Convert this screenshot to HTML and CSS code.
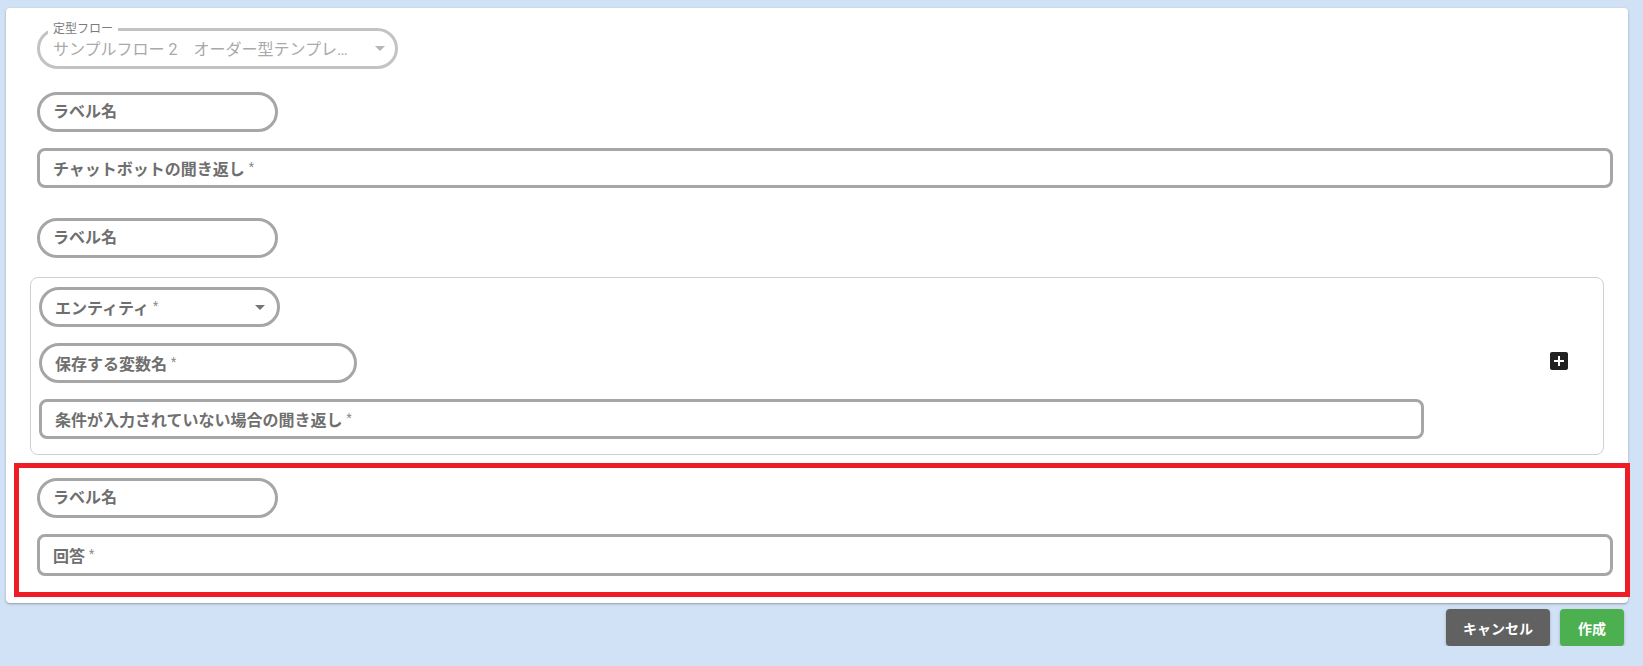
FILE: index.html
```html
<!DOCTYPE html>
<html lang="ja">
<head>
<meta charset="utf-8">
<title>Form</title>
<link rel="stylesheet" href="styles.css">
</head>
<body>
<div class="page">
  <div class="card">
    <div class="select is-disabled">
      <span class="float-label">定型フロー</span>
      <span class="select-value">サンプルフロー 2　オーダー型テンプレ…</span>
      <span class="caret caret-light"></span>
    </div>

    <div class="field pill w-short mt-23"><span class="ph">ラベル名</span></div>
    <div class="field box mt-16 mr-15"><span class="ph">チャットボットの聞き返し<span class="req">*</span></span></div>

    <div class="field pill w-short mt-30"><span class="ph">ラベル名</span></div>

    <div class="group">
      <div class="group-fields">
        <div class="field pill w-short select-like"><span class="ph">エンティティ<span class="req">*</span></span><span class="caret"></span></div>
        <div class="field pill w-var mt-16"><span class="ph">保存する変数名<span class="req">*</span></span></div>
        <div class="field box mt-16"><span class="ph">条件が入力されていない場合の聞き返し<span class="req">*</span></span></div>
      </div>
      <svg class="add-icon" viewBox="0 0 24 24" width="24" height="24" aria-hidden="true">
        <path fill="#212121" d="M19 3H5c-1.11 0-2 .9-2 2v14c0 1.1.89 2 2 2h14c1.1 0 2-.9 2-2V5c0-1.1-.9-2-2-2zm-2 10h-4v4h-2v-4H7v-2h4V7h2v4h4v2z"/>
      </svg>
    </div>

    <div class="highlight">
      <div class="field pill w-short"><span class="ph">ラベル名</span></div>
      <div class="field box tall mt-16"><span class="ph">回答<span class="req">*</span></span></div>
    </div>
  </div>

  <div class="actions">
    <button class="btn btn-cancel">キャンセル</button>
    <button class="btn btn-create">作成</button>
  </div>
</div>
</body>
</html>
```

FILE: styles.css
```css
* { box-sizing: border-box; }

html, body {
  margin: 0;
  padding: 0;
  background: #d1e1f6;
  font-family: "Roboto", "Noto Sans CJK JP", sans-serif;
}

.page {
  padding: 8px 15px 0 6px;
}

.card {
  background: #ffffff;
  border-radius: 4px;
  box-shadow: 0 1px 3px rgba(0, 0, 0, 0.22), 0 1px 1px rgba(0, 0, 0, 0.12);
  padding: 20px 0 6px 31px;
}

/* disabled select with notched label */
.select {
  position: relative;
  display: flex;
  align-items: center;
  width: 361px;
  height: 41px;
  border: 3px solid #c3c3c3;
  border-radius: 21px;
  padding: 3px 13px 0 13px;
}

.float-label {
  position: absolute;
  left: 8px;
  top: -9px;
  height: 14px;
  line-height: 14px;
  padding: 0 5px;
  background: #ffffff;
  font-size: 12px;
  color: #7a7a7a;
}

.select-value {
  flex: 1;
  white-space: nowrap;
  overflow: hidden;
  font-size: 16px;
  color: #a9a9a9;
  line-height: 20px;
}

.caret {
  width: 0;
  height: 0;
  border-left: 5px solid transparent;
  border-right: 5px solid transparent;
  border-top: 5px solid #757575;
  margin-left: auto;
}

.caret-light {
  border-top-color: #b6b6b6;
  margin-top: -3px;
  margin-right: -3px;
}

/* text fields */
.field {
  display: flex;
  align-items: center;
  height: 40px;
  border: 3px solid #a6a6a6;
  padding: 0 13px;
  background: #ffffff;
}

.tall { height: 42px; }

.pill { border-radius: 20px; }
.box { border-radius: 8px; }

.w-short { width: 241px; }
.w-var { width: 318px; }

.select-like { padding-right: 12px; }

.ph {
  font-size: 16px;
  font-weight: 700;
  color: #6f6f6f;
  line-height: 20px;
  white-space: nowrap;
}

.req {
  font-weight: 400;
  font-size: 12px;
  color: #8a8a8a;
  margin-left: 4px;
  vertical-align: 4px;
}

.mt-16 { margin-top: 16px; }
.mt-23 { margin-top: 23px; }
.mt-30 { margin-top: 30px; }
.mr-15 { margin-right: 15px; }

/* grouped block */
.group {
  display: grid;
  grid-template-columns: 1fr 24px;
  column-gap: 123px;
  align-items: center;
  margin: 19px 24px 0 -7px;
  border: 1px solid #d0d0d0;
  border-radius: 8px;
  padding: 9px 32px 15px 8px;
}

.group-fields {
  display: flex;
  flex-direction: column;
}

.add-icon {
  display: block;
  margin-top: -4px;
}

/* red highlight */
.highlight {
  margin: 8px -2px 0 -23px;
  border: 5px solid #ee1c25;
  padding: 10px 12px 16px 18px;
}

/* buttons */
.actions {
  display: flex;
  justify-content: flex-end;
  gap: 10px;
  margin-top: 6px;
  padding-right: 4px;
}

.btn {
  height: 37px;
  border: none;
  border-radius: 4px;
  color: #ffffff;
  font-family: "Roboto", "Noto Sans CJK JP", sans-serif;
  font-size: 14px;
  font-weight: 700;
  box-shadow: 0 2px 2px rgba(0, 0, 0, 0.18), 0 1px 4px rgba(0, 0, 0, 0.1);
  cursor: pointer;
}

.btn-cancel {
  width: 104px;
  background: #616161;
}

.btn-create {
  width: 64px;
  background: #4caf50;
}
```
